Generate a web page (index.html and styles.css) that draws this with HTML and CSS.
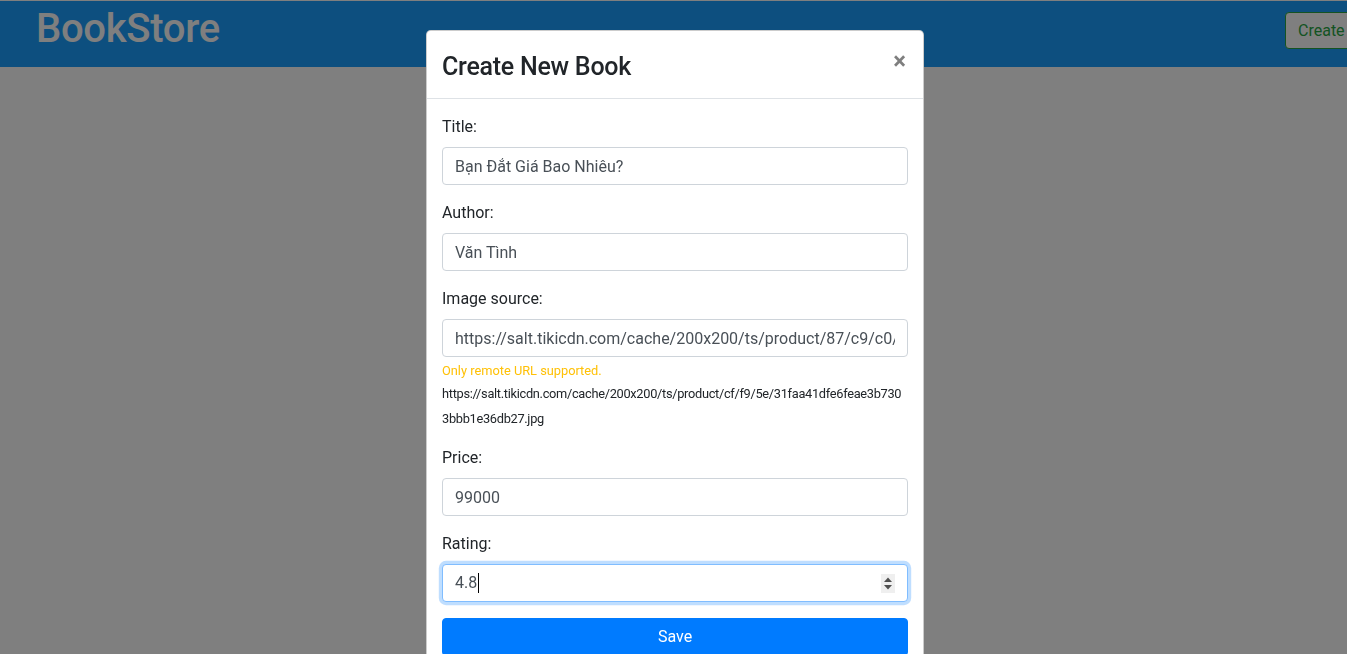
FILE: index.html
```html
<!DOCTYPE html>
<html lang="vi">
<head>
<meta charset="utf-8">
<title>BookStore</title>
<link rel="stylesheet" href="styles.css">
</head>
<body>
<header class="navbar">
  <h1 class="brand">BookStore</h1>
  <div class="nav-actions">
    <button class="btn-create" type="button">Create New Book</button>
  </div>
</header>
<main class="page"></main>
<div class="backdrop"></div>
<div class="modal">
  <div class="modal-content">
    <div class="modal-header">
      <h5 class="modal-title">Create New Book</h5>
      <button class="close" type="button" aria-label="Close">&times;</button>
    </div>
    <div class="modal-body">
      <form class="form">
        <div class="form-group">
          <label class="label">Title:</label>
          <input class="form-control" type="text" value="Bạn Đắt Giá Bao Nhiêu?">
        </div>
        <div class="form-group">
          <label class="label">Author:</label>
          <input class="form-control" type="text" value="Văn Tình">
        </div>
        <div class="form-group">
          <label class="label">Image source:</label>
          <input class="form-control" type="text" value="https://salt.tikicdn.com/cache/200x200/ts/product/87/c9/c0/bf1a2b3c4d5e6f.jpg">
          <small class="form-text warn">Only remote URL supported.</small>
          <div class="url-preview"><small class="url">https://salt.tikicdn.com/cache/200x200/ts/product/cf/f9/5e/31faa41dfe6feae3b7303bbb1e36db27.jpg</small></div>
        </div>
        <div class="form-group">
          <label class="label">Price:</label>
          <input class="form-control" type="text" value="99000">
        </div>
        <div class="form-group">
          <label class="label">Rating:</label>
          <div class="form-control focused">
            <span class="val">4.8</span><span class="caret"></span>
            <span class="spinner">
              <svg width="14" height="19" viewBox="0 0 14 19"><rect width="14" height="19" fill="#efefef"/><path d="M3 8 L7 3.5 L11 8 Z" fill="#505050"/><path d="M3 11 L7 15.5 L11 11 Z" fill="#505050"/></svg>
            </span>
          </div>
        </div>
        <button class="btn-save" type="button">Save</button>
      </form>
    </div>
  </div>
</div>
</body>
</html>
```

FILE: styles.css
```css
* { box-sizing: border-box; }
html, body { height: 100%; }
body {
  margin: 0;
  overflow: hidden;
  background: #fff;
  font-family: Roboto, "Liberation Sans", Arial, sans-serif;
  font-size: 16px;
  line-height: 1.5;
  color: #212529;
}
.navbar {
  margin-top: 1px;
  height: 66px;
  background: #1b9eff;
  display: flex;
  align-items: flex-start;
  padding: 0 0 0 36px;
}
.brand {
  margin: 4px 0 0;
  font-size: 40px;
  font-weight: 500;
  line-height: 48px;
  color: #fff;
  letter-spacing: -0.3px;
}
.nav-actions {
  margin-left: auto;
  width: 62px;
  flex: none;
}
.btn-create {
  margin-top: 11px;
  height: 37px;
  padding: 0 12px;
  white-space: nowrap;
  font: inherit;
  font-size: 16px;
  color: #28a745;
  background: #fff;
  border: 1px solid #28a745;
  border-radius: 4px;
}
.backdrop {
  position: fixed;
  inset: 0;
  background: rgba(0, 0, 0, 0.5);
}
.modal {
  position: fixed;
  inset: 0;
  display: flex;
  justify-content: center;
  padding-left: 3px;
  overflow: hidden;
}
.modal-content {
  margin-top: 30px;
  width: 498px;
  background: #fff;
  border: 1px solid rgba(0, 0, 0, 0.2);
  border-radius: 4.8px;
  align-self: flex-start;
}
.modal-header {
  display: flex;
  align-items: flex-start;
  justify-content: space-between;
  height: 68px;
  padding: 19px 16px 0 15px;
  border-bottom: 1px solid #dee2e6;
}
.modal-title {
  margin: 1px 0 0;
  font-size: 25px;
  font-weight: 500;
  line-height: 32px;
  color: #212529;
  letter-spacing: -0.25px;
}
.close {
  padding: 0 1px 0 8px;
  margin: -1px 0 0;
  border: 0;
  background: transparent;
  font: inherit;
  font-size: 24px;
  font-weight: 700;
  line-height: 1;
  color: #000;
  opacity: 0.5;
}
.modal-body { padding: 16px 15px; }
.form-group { margin-bottom: 16px; display: flex; flex-direction: column; }
.label { display: block; margin-bottom: 8px; }
.form-control {
  display: block;
  width: 100%;
  height: 38px;
  padding: 6px 12px;
  font: inherit;
  font-size: 16px;
  line-height: 24px;
  color: #495057;
  background: #fff;
  border: 1px solid #ced4da;
  border-radius: 4px;
}
.focused {
  display: flex;
  align-items: center;
  border-color: #80bdff;
  box-shadow: 0 0 0 3.2px rgba(0, 123, 255, 0.25);
}
.caret { display: inline-block; width: 1px; height: 20px; background: #000; margin-left: 1px; }
.spinner { margin-left: auto; margin-right: 0; display: flex; }
.form-text { display: block; margin-top: 4px; font-size: 12.8px; line-height: 19.2px; }
.warn { color: #ffc107; }
.url-preview { line-height: 24px; padding-top: 1px; margin-bottom: -1px; }
.url { font-size: 12.8px; letter-spacing: -0.3px; word-break: break-all; color: #212529; }
.btn-save {
  display: block;
  width: 100%;
  height: 38px;
  padding: 6px 12px;
  font: inherit;
  color: #fff;
  background: #007bff;
  border: 1px solid #007bff;
  border-radius: 4px;
}
```
